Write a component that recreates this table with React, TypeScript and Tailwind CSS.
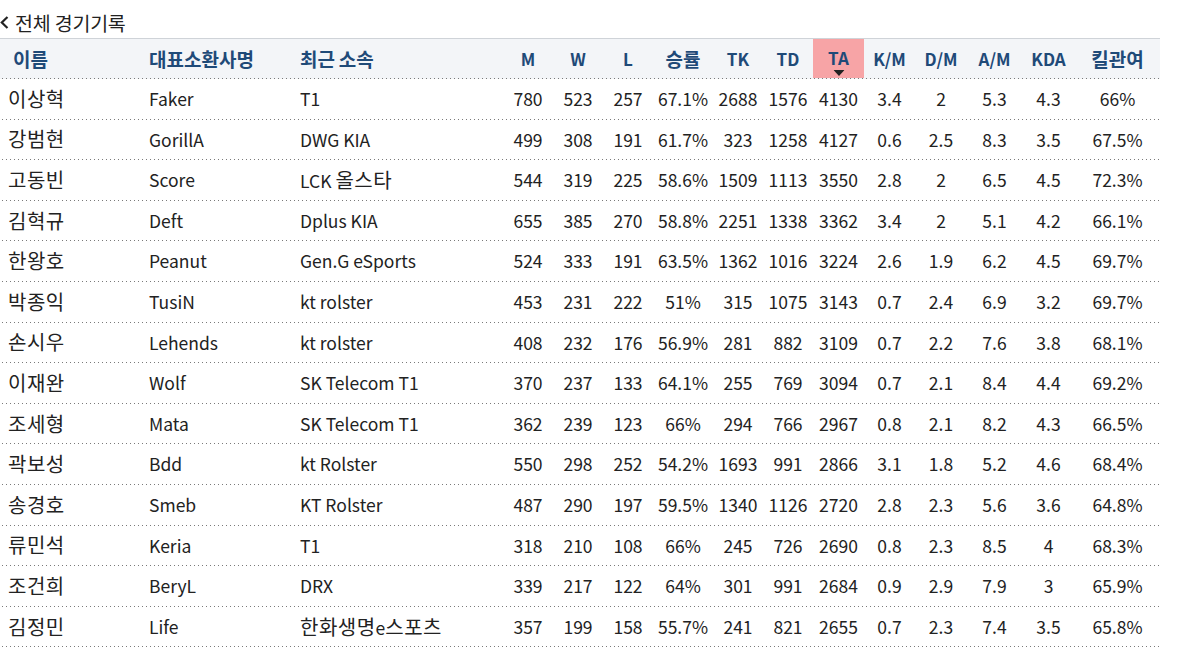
import React from "react";

const grid = "grid grid-cols-[141px_151px_211px_50px_50px_50px_60px_50px_50px_51px_51px_52px_55px_53px_85px]";
const dots = "bg-[linear-gradient(to_right,#7a7a7a_1px,transparent_1px)] bg-[length:4px_1px] bg-repeat-x bg-bottom";

const headers = ["이름", "대표소환사명", "최근 소속", "M", "W", "L", "승률", "TK", "TD", "TA", "K/M", "D/M", "A/M", "KDA", "킬관여"];

const rows: (string | number)[][] = [
  ["이상혁", "Faker", "T1", 780, 523, 257, "67.1%", 2688, 1576, 4130, 3.4, 2, 5.3, 4.3, "66%"],
  ["강범현", "GorillA", "DWG KIA", 499, 308, 191, "61.7%", 323, 1258, 4127, 0.6, 2.5, 8.3, 3.5, "67.5%"],
  ["고동빈", "Score", "LCK 올스타", 544, 319, 225, "58.6%", 1509, 1113, 3550, 2.8, 2, 6.5, 4.5, "72.3%"],
  ["김혁규", "Deft", "Dplus KIA", 655, 385, 270, "58.8%", 2251, 1338, 3362, 3.4, 2, 5.1, 4.2, "66.1%"],
  ["한왕호", "Peanut", "Gen.G eSports", 524, 333, 191, "63.5%", 1362, 1016, 3224, 2.6, 1.9, 6.2, 4.5, "69.7%"],
  ["박종익", "TusiN", "kt rolster", 453, 231, 222, "51%", 315, 1075, 3143, 0.7, 2.4, 6.9, 3.2, "69.7%"],
  ["손시우", "Lehends", "kt rolster", 408, 232, 176, "56.9%", 281, 882, 3109, 0.7, 2.2, 7.6, 3.8, "68.1%"],
  ["이재완", "Wolf", "SK Telecom T1", 370, 237, 133, "64.1%", 255, 769, 3094, 0.7, 2.1, 8.4, 4.4, "69.2%"],
  ["조세형", "Mata", "SK Telecom T1", 362, 239, 123, "66%", 294, 766, 2967, 0.8, 2.1, 8.2, 4.3, "66.5%"],
  ["곽보성", "Bdd", "kt Rolster", 550, 298, 252, "54.2%", 1693, 991, 2866, 3.1, 1.8, 5.2, 4.6, "68.4%"],
  ["송경호", "Smeb", "KT Rolster", 487, 290, 197, "59.5%", 1340, 1126, 2720, 2.8, 2.3, 5.6, 3.6, "64.8%"],
  ["류민석", "Keria", "T1", 318, 210, 108, "66%", 245, 726, 2690, 0.8, 2.3, 8.5, 4, "68.3%"],
  ["조건희", "BeryL", "DRX", 339, 217, 122, "64%", 301, 991, 2684, 0.9, 2.9, 7.9, 3, "65.9%"],
  ["김정민", "Life", "한화생명e스포츠", 357, 199, 158, "55.7%", 241, 821, 2655, 0.7, 2.3, 7.4, 3.5, "65.8%"],
];

function Mixed({ text, big }: { text: string; big: string }) {
  const parts = text.match(/[\uAC00-\uD7A3]+|[^\uAC00-\uD7A3]+/g) || [];
  return (
    <span className="leading-none">
      {parts.map((p, i) =>
        /[\uAC00-\uD7A3]/.test(p) ? (
          <span key={i} className={big}>{p}</span>
        ) : (
          <span key={i}>{p}</span>
        )
      )}
    </span>
  );
}

export default function App() {
  return (
    <div
      className="w-[1179px] h-[657px] bg-white overflow-hidden text-[#222]"
      style={{ fontFamily: '"Noto Sans CJK KR", "Noto Sans", sans-serif' }}
    >
      <div className="flex items-center h-[38px] pt-[7px] gap-[6px]">
        <svg width="9" height="13" viewBox="0 0 9 13">
          <polyline points="7.5,1 1.8,6.5 7.5,12" fill="none" stroke="#222" strokeWidth="2.2" />
        </svg>
        <span className="text-[19.5px] leading-none tracking-[-0.2px]">전체 경기기록</span>
      </div>
      <div className="w-[1160px]">
        <div className={`${grid} ${dots} h-[41px] bg-[#f3f5f8] border-t border-[#cfd3d8] text-[#1f4a78] font-bold text-[17px]`}>
          {headers.map((h, i) => {
            const align = i === 0 ? "justify-start pl-[13px]" : i < 3 ? "justify-start pl-[8px]" : "justify-center";
            if (h === "TA") {
              return (
                <div key={i} className="relative flex items-center justify-center bg-[#f7a4a6] mb-[1px] pb-[2px]">
                  <span className="leading-none">TA</span>
                  <svg width="11" height="6" viewBox="0 0 11 6" className="absolute bottom-[2px] left-1/2 -translate-x-1/2">
                    <polygon points="0,0 11,0 5.5,6" fill="#222" />
                  </svg>
                </div>
              );
            }
            return (
              <div key={i} className={`flex items-center pb-[2px] ${align}`}>
                <Mixed text={h} big="text-[19px]" />
              </div>
            );
          })}
        </div>
        {rows.map((r, ri) => (
          <div key={ri} className={`${grid} ${dots} h-[40.6px] text-[17.5px]`}>
            {r.map((c, ci) => (
              <div
                key={ci}
                className={`flex items-center whitespace-nowrap pb-[1px] ${ci < 3 ? "justify-start pl-[8px]" : "justify-center"}`}
              >
                <Mixed text={String(c)} big="text-[20px] tracking-[0.5px]" />
              </div>
            ))}
          </div>
        ))}
      </div>
    </div>
  );
}
